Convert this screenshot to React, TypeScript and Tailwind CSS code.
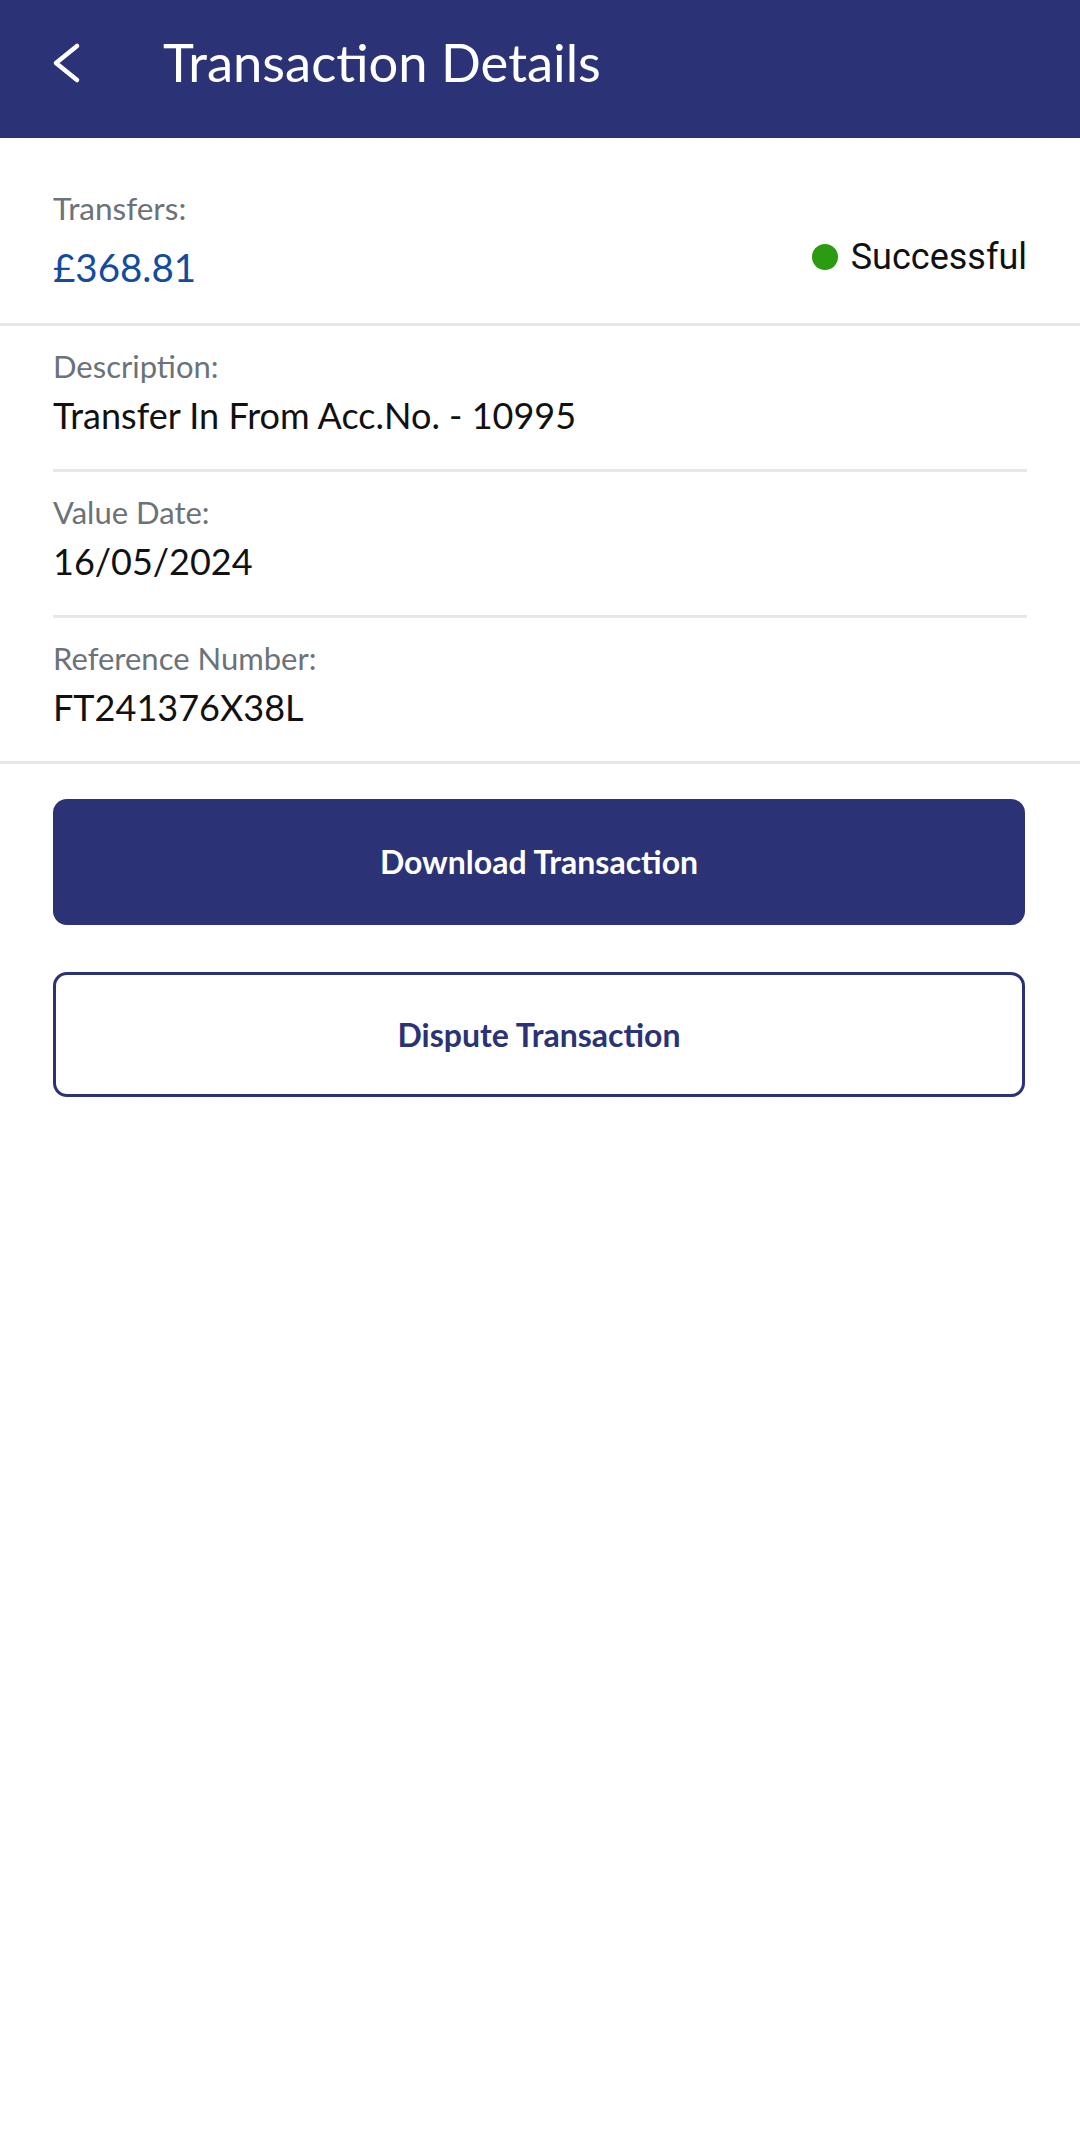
import React from "react";

function Row({ label, value, inset = true }: { label: string; value: string; inset?: boolean }) {
  return (
    <div className={inset ? "mx-[53px] border-b-[3px] border-[#e3e7ee]" : "border-b-[3px] border-[#e3e7ee]"}>
      <div className={inset ? "pt-[22px] pb-[33px]" : "px-[53px] pt-[22px] pb-[33px]"}>
        <div className="text-[31px] leading-[36px] text-[#6b7278]">{label}</div>
        <div className="mt-[10px] text-[36px] leading-[42px] text-[#111111]">{value}</div>
      </div>
    </div>
  );
}

export default function App() {
  return (
    <div className="min-h-[2139px] w-[1080px] bg-white" style={{ fontFamily: "Lato, 'Noto Sans', sans-serif" }}>
      <header className="h-[138px] bg-[#2b3275] px-[48px] pt-[31px]">
        <div className="flex h-[61px] items-center">
          <svg width="34" height="44" viewBox="0 0 34 44" className="mt-[3px]" fill="none">
            <path d="M29 5 L8 22 L29 39" stroke="white" strokeWidth="4.5" strokeLinecap="round" strokeLinejoin="round" />
          </svg>
          <h1 className="ml-[81px] text-[52.5px] leading-[61px] font-normal text-white">Transaction Details</h1>
        </div>
      </header>

      <section className="border-b-[3px] border-[#e3e7ee] px-[53px] pt-[52px] pb-[32px]">
        <div className="flex items-start justify-between">
          <div>
            <div className="text-[31.5px] leading-[36px] text-[#6b7278]">Transfers:</div>
            <div className="mt-[17px] text-[38.5px] leading-[48px] text-[#134c9e]">£368.81</div>
          </div>
          <div className="mt-[46px] flex items-center gap-[13px]">
            <span className="block h-[26px] w-[26px] rounded-full bg-[#2b9c12]" />
            <span className="text-[36px] leading-[42px] text-[#111111]" style={{ fontFamily: "Roboto, sans-serif" }}>
              Successful
            </span>
          </div>
        </div>
      </section>

      <Row label="Description:" value="Transfer In From Acc.No. - 10995" />
      <Row label="Value Date:" value="16/05/2024" />
      <Row label="Reference Number:" value="FT241376X38L" inset={false} />

      <div className="pl-[53px] pr-[55px] pt-[35px]">
        <button className="flex h-[126px] w-full items-center justify-center rounded-[14px] bg-[#2b3275] text-[32px] font-bold text-white">
          Download Transaction
        </button>
        <button className="mt-[47px] flex h-[125px] w-full items-center justify-center rounded-[14px] border-[3px] border-[#2b3275] bg-white text-[32px] font-bold text-[#2b3275]">
          Dispute Transaction
        </button>
      </div>
    </div>
  );
}
